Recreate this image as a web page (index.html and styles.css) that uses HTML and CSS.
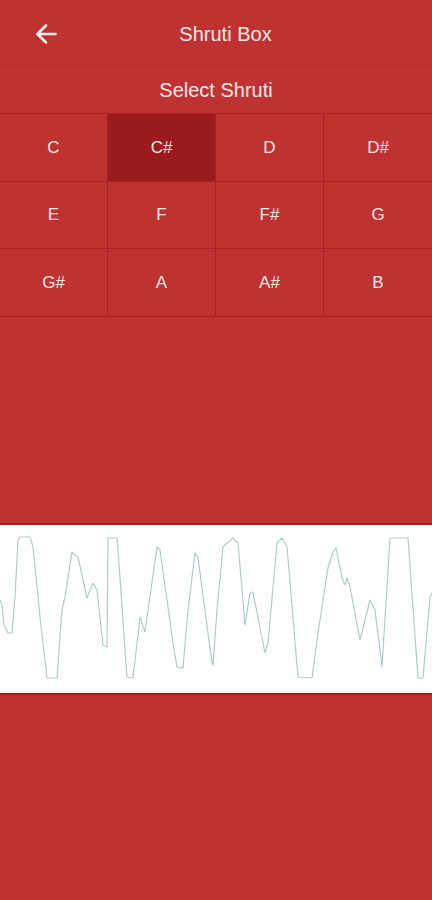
FILE: index.html
```html
<!DOCTYPE html>
<html lang="en">
<head>
<meta charset="utf-8">
<title>Shruti Box</title>
<link rel="stylesheet" href="styles.css">
</head>
<body>
<div class="app">
  <header class="toolbar">
    <button class="back" aria-label="Back">
      <svg width="22" height="22" viewBox="0 0 22 22" fill="none" stroke="#fbeeee" stroke-width="2.6" stroke-linecap="round" stroke-linejoin="round">
        <path d="M20.5 11H2.5"/>
        <path d="M11 2.5L2.5 11L11 19.5"/>
      </svg>
    </button>
    <h1 class="title">Shruti Box</h1>
  </header>
  <div class="subtitle">Select Shruti</div>
  <div class="notes">
    <div class="note">C</div>
    <div class="note selected">C#</div>
    <div class="note">D</div>
    <div class="note">D#</div>
    <div class="note">E</div>
    <div class="note">F</div>
    <div class="note">F#</div>
    <div class="note">G</div>
    <div class="note">G#</div>
    <div class="note">A</div>
    <div class="note">A#</div>
    <div class="note">B</div>
  </div>
  <div class="wave">
    <svg class="wave-svg" width="432" height="168" viewBox="0 0 432 168" preserveAspectRatio="none">
      <polyline fill="none" stroke="#aecccc" stroke-width="1.2" stroke-linejoin="round"
        points="0,75 2,80 4,100 8,108 12,108 13,95 15,72 18,15 20,12 30,12 33,22 40,92 47,153 57,153 62,85 65,72 72,27 75,30 78,32 87,73 93,58 97,65 103,120 107,122 108,13 117,13 118,25 127,152 133,153 140,92 145,107 148,85 157,22 160,25 173,118 177,142 183,143 188,85 195,28 198,33 212,138 213,140 217,85 223,22 227,18 233,13 238,18 245,100 250,68 253,67 265,128 268,118 277,18 282,13 287,22 298,152 312,153 318,108 328,43 333,27 336,23 342,53 345,60 347,53 350,62 360,115 370,75 375,85 382,142 390,13 408,13 418,153 423,153 430,72 432,68"/>
    </svg>
  </div>
</div>
</body>
</html>
```
FILE: styles.css
```css
* { box-sizing: border-box; }
html, body {
  margin: 0;
  padding: 0;
}
body {
  background: #bf3232;
  font-family: "Liberation Sans", Arial, sans-serif;
  color: #f8eaea;
}
.app {
  width: 432px;
  min-height: 900px;
  background: #bf3232;
}
.toolbar {
  height: 66px;
  display: flex;
  align-items: center;
  padding-top: 3px;
  padding-left: 35px;
  padding-right: 38px;
  border-bottom: 1px solid rgba(120, 20, 20, 0.12);
}
.back {
  width: 22px;
  height: 22px;
  padding: 0;
  border: 0;
  background: none;
  display: flex;
}
.title {
  flex: 1;
  margin: 0;
  text-align: center;
  font-size: 20px;
  font-weight: normal;
  color: #f8eaea;
}
.subtitle {
  height: 47px;
  display: flex;
  align-items: center;
  justify-content: center;
  font-size: 20px;
  padding-top: 1px;
}
.notes {
  display: grid;
  grid-template-columns: repeat(4, 1fr);
  grid-auto-rows: 67.5px;
  border-top: 1px solid #a52222;
}
.note {
  display: flex;
  align-items: center;
  justify-content: center;
  font-size: 17px;
  padding-top: 1px;
  border-right: 1px solid #a52222;
  border-bottom: 1px solid #a52222;
  color: #f6e6e6;
}
.note:nth-child(4n) { border-right: 0; }
.note.selected { background: #991b1b; }
.wave {
  margin-top: 206px;
  height: 172px;
  background: #ffffff;
  border-top: 2px solid #a51c1c;
  border-bottom: 2px solid #a51c1c;
}
.wave-svg { display: block; }
```
